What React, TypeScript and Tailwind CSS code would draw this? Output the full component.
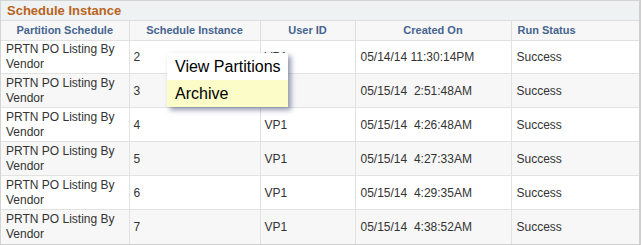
import React from "react";

const rows = [
  { inst: "2", user: "VP1", created: "05/14/14 11:30:14PM" },
  { inst: "3", user: "VP1", created: "05/15/14  2:51:48AM" },
  { inst: "4", user: "VP1", created: "05/15/14  4:26:48AM" },
  { inst: "5", user: "VP1", created: "05/15/14  4:27:33AM" },
  { inst: "6", user: "VP1", created: "05/15/14  4:29:35AM" },
  { inst: "7", user: "VP1", created: "05/15/14  4:38:52AM" },
];

export default function App() {
  return (
    <div className="relative w-[642px] h-[245px] bg-white font-['Liberation_Sans',Arial,sans-serif]">
      <div className="w-[641px] border-l border-t border-[#d4d4d4] border-r-2 border-b-2 border-r-[#cfcfcf] border-b-[#cfcfcf]">
        <div className="h-[19px] bg-[#eef2f3] px-[6px] flex items-center text-[13px] font-bold text-[#b9631b]">
          Schedule Instance
        </div>
        <table className="w-full border-collapse table-fixed text-[12px] text-[#333]">
          <colgroup>
            <col className="w-[128px]" />
            <col className="w-[131px]" />
            <col className="w-[95px]" />
            <col className="w-[156px]" />
            <col />
          </colgroup>
          <thead>
            <tr className="h-[20px] bg-[#f7f7f7] text-[11px] font-bold text-[#45648f]">
              <th className="border-t border-r border-[#dedede] font-bold text-center">Partition Schedule</th>
              <th className="border-t border-r border-[#dedede] font-bold text-center">Schedule Instance</th>
              <th className="border-t border-r border-[#dedede] font-bold text-center">User ID</th>
              <th className="border-t border-r border-[#dedede] font-bold text-center">Created On</th>
              <th className="border-t border-[#dedede] font-bold text-left pl-[6px]">Run Status</th>
            </tr>
          </thead>
          <tbody>
            {rows.map((r, i) => (
              <tr key={r.inst} className={`${i === 0 ? "h-[33px]" : "h-[34px]"} ${i % 2 === 1 ? "bg-[#f7f7f7]" : "bg-white"}`}>
                <td className="border-t border-r border-[#e2e2e2] pl-[5px] leading-[15px] align-middle">
                  PRTN PO Listing By Vendor
                </td>
                <td className="border-t border-r border-[#e2e2e2] pl-[4px]">{r.inst}</td>
                <td className="border-t border-r border-[#e2e2e2] pl-[4px]">{r.user}</td>
                <td className="border-t border-r border-[#e2e2e2] pl-[5px] whitespace-pre">{r.created}</td>
                <td className="border-t border-[#e2e2e2] pl-[5px]">Success</td>
              </tr>
            ))}
          </tbody>
        </table>
      </div>

      <div className="absolute left-[167px] top-[53px] w-[121px] bg-white text-[16px] text-black shadow-[3px_3px_5px_rgba(60,70,110,0.55)]">
        <div className="h-[27px] flex items-center pl-[8px]">View Partitions</div>
        <div className="h-[27px] flex items-center pl-[8px] bg-[#fcfcc8]">Archive</div>
      </div>
    </div>
  );
}
